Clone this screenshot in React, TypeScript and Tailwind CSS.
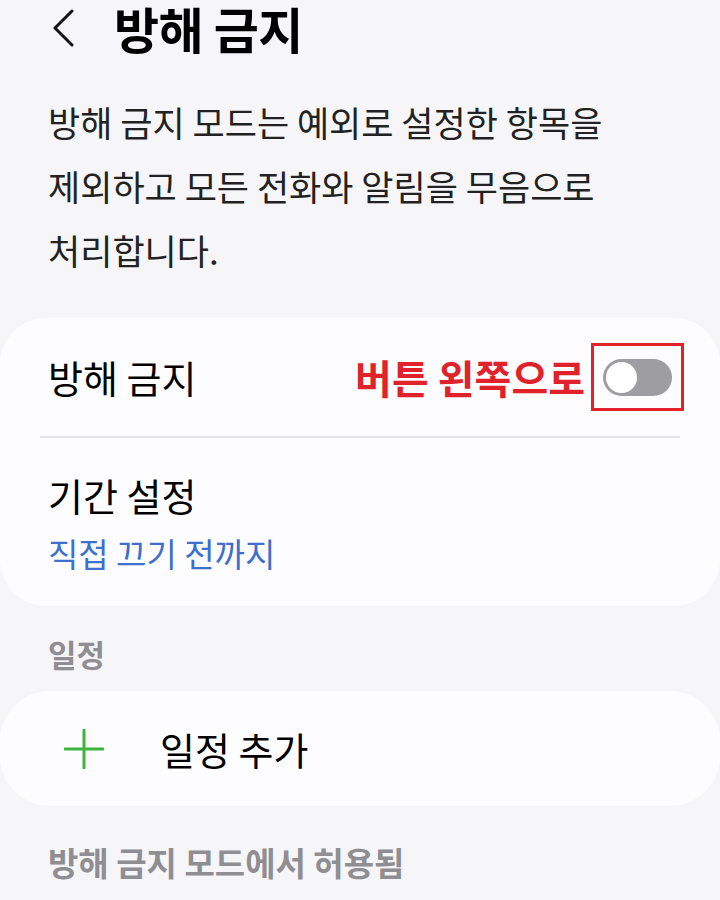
const font = { fontFamily: '"Noto Sans CJK KR", "Noto Sans", sans-serif' };

function Toggle() {
  return (
    <div className="flex h-[37px] w-[69px] items-center rounded-full bg-[#9d9da2] p-[3px]">
      <div className="h-[31px] w-[31px] rounded-full bg-white" />
    </div>
  );
}

function Plus() {
  return (
    <svg width="40" height="40" viewBox="0 0 40 40" aria-hidden="true">
      <path d="M20 1 V39 M1 20 H39" stroke="#3cb43c" strokeWidth="3" strokeLinecap="round" />
    </svg>
  );
}

export default function App() {
  return (
    <div className="h-[900px] w-[720px] overflow-hidden bg-[#f6f6f8] text-black" style={font}>
      {/* header */}
      <div className="flex h-[56px] items-center">
        <svg className="ml-[52px]" width="22" height="38" viewBox="0 0 22 38" aria-hidden="true">
          <path d="M20 2 L3 19 L20 36" fill="none" stroke="#111" strokeWidth="3" strokeLinecap="round" strokeLinejoin="round" />
        </svg>
        <h1 className="ml-[40px] text-[49px] font-bold leading-[56px] tracking-[-0.5px]">방해 금지</h1>
      </div>

      {/* description */}
      <p className="mt-[34px] px-[48px] text-[35px] leading-[64px] text-[#222]">
        방해 금지 모드는 예외로 설정한 항목을
        <br />
        제외하고 모든 전화와 알림을 무음으로
        <br />
        처리합니다.
      </p>

      {/* main card */}
      <div className="mt-[36px] rounded-[46px] bg-[#fdfdff]">
        <div className="flex h-[118px] items-center justify-between pl-[48px] pr-[36px]">
          <span className="text-[38px] leading-none">방해 금지</span>
          <div className="flex items-center">
            <span className="mr-[6px] text-[40px] font-bold leading-none text-[#e1222b]">버튼 왼쪽으로</span>
            <div className="flex h-[68px] w-[93px] items-center justify-center border-[3px] border-[#e3212b]">
              <Toggle />
            </div>
          </div>
        </div>
        <div className="mx-[40px] h-[2px] bg-[#e3e3e7]" />
        <div className="flex flex-col px-[48px] pb-[33px] pt-[37px]">
          <span className="text-[38px] leading-[40px]">기간 설정</span>
          <span className="mt-[18px] text-[33px] leading-[40px] text-[#3d6fcf]">직접 끄기 전까지</span>
        </div>
      </div>

      {/* schedule */}
      <div className="mt-[28px] px-[48px] text-[31px] font-semibold leading-[40px] text-[#8e8e93]">일정</div>
      <div className="mt-[17px] flex h-[115px] items-center rounded-[50px] bg-[#fdfdff] pl-[64px]">
        <Plus />
        <span className="ml-[56px] text-[38px] leading-none">일정 추가</span>
      </div>

      <div className="mt-[36px] px-[48px] text-[33px] font-semibold leading-[40px] text-[#8e8e93]">
        방해 금지 모드에서 허용됨
      </div>
    </div>
  );
}
